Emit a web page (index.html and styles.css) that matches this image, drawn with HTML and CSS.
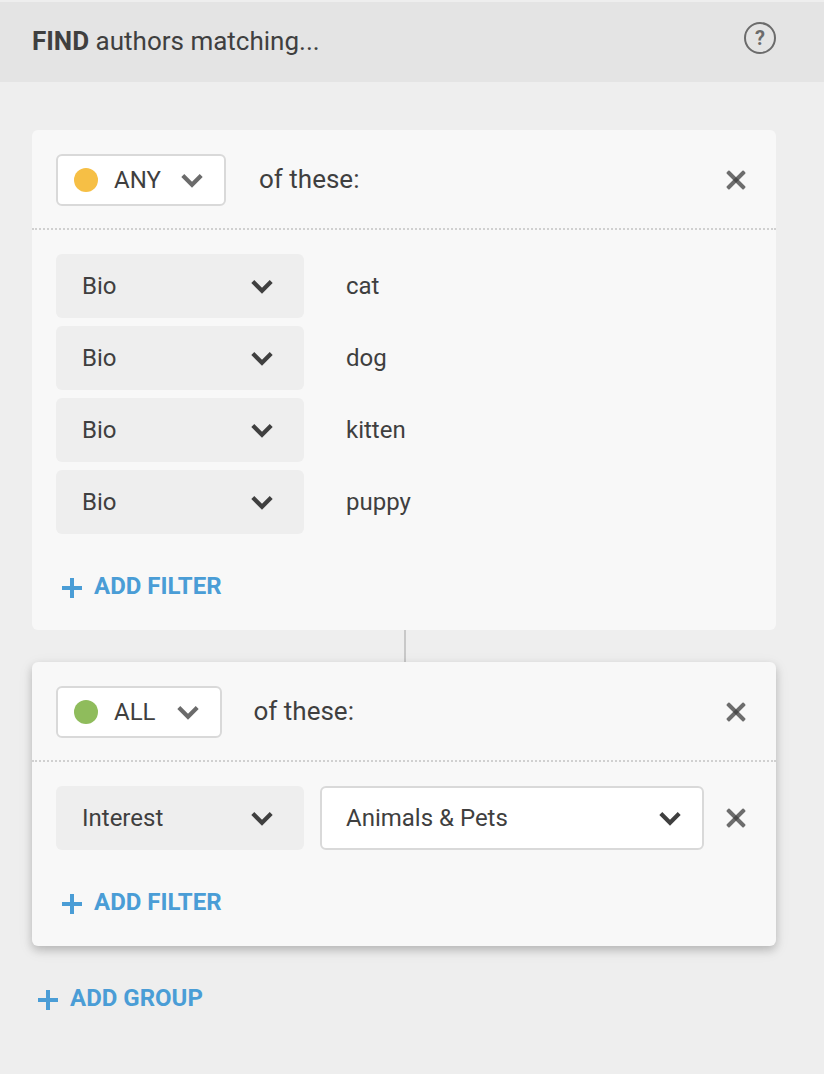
FILE: index.html
```html
<!DOCTYPE html>
<html lang="en">
<head>
<meta charset="utf-8">
<title>Find authors</title>
<link rel="stylesheet" href="styles.css">
</head>
<body>
<svg class="defs" width="0" height="0" aria-hidden="true">
  <symbol id="chevron" viewBox="0 0 24 16"><path d="M2.8 3.6 12 12.8 21.2 3.6" fill="none" stroke="currentColor" stroke-width="4.2"/></symbol>
  <symbol id="close" viewBox="0 0 24 24"><g fill="#3f3f3f" fill-opacity=".75"><rect x="0" y="10" width="24" height="4" rx="1" transform="rotate(45 12 12)"/><rect x="0" y="10" width="24" height="4" rx="1" transform="rotate(-45 12 12)"/></g></symbol>
  <symbol id="plus" viewBox="0 0 20 20"><path d="M8 0h4v8h8v4h-8v8H8v-8H0V8h8z" fill="currentColor"/></symbol>
</svg>
<header class="header">
  <h1 class="title"><strong>FIND</strong> authors matching...</h1>
  <div class="help">?</div>
</header>
<main class="main">
  <section class="card">
    <div class="card-head">
      <button class="mode mode-any"><span class="dot dot-any"></span><span class="mode-label">ANY</span><svg class="chevron"><use href="#chevron"/></svg></button>
      <span class="of">of these:</span>
      <button class="close"><svg class="x"><use href="#close"/></svg></button>
    </div>
    <div class="filters">
      <div class="row"><div class="field"><span>Bio</span><svg class="chevron"><use href="#chevron"/></svg></div><span class="value">cat</span></div>
      <div class="row"><div class="field"><span>Bio</span><svg class="chevron"><use href="#chevron"/></svg></div><span class="value">dog</span></div>
      <div class="row"><div class="field"><span>Bio</span><svg class="chevron"><use href="#chevron"/></svg></div><span class="value">kitten</span></div>
      <div class="row"><div class="field"><span>Bio</span><svg class="chevron"><use href="#chevron"/></svg></div><span class="value">puppy</span></div>
    </div>
    <button class="add"><svg class="plus"><use href="#plus"/></svg><span>ADD FILTER</span></button>
  </section>
  <div class="connector"></div>
  <section class="card card-active">
    <div class="card-head">
      <button class="mode mode-all"><span class="dot dot-all"></span><span class="mode-label">ALL</span><svg class="chevron"><use href="#chevron"/></svg></button>
      <span class="of">of these:</span>
      <button class="close"><svg class="x"><use href="#close"/></svg></button>
    </div>
    <div class="filters">
      <div class="row"><div class="field"><span>Interest</span><svg class="chevron"><use href="#chevron"/></svg></div><div class="select"><span>Animals &amp; Pets</span><svg class="chevron"><use href="#chevron"/></svg></div><button class="close"><svg class="x"><use href="#close"/></svg></button></div>
    </div>
    <button class="add"><svg class="plus"><use href="#plus"/></svg><span>ADD FILTER</span></button>
  </section>
  <button class="add add-group"><svg class="plus"><use href="#plus"/></svg><span>ADD GROUP</span></button>
</main>
</body>
</html>
```
FILE: styles.css
```css
* { box-sizing: border-box; }
body { margin: 0; min-height: 1074px; background: #eee; color: #3f3f3f; font: 24px/32px Roboto, sans-serif; }
button { border: 0; margin: 0; padding: 0; background: none; color: inherit; font: inherit; letter-spacing: inherit; }
svg { display: block; flex: none; }
.defs { position: absolute; }
.header { display: flex; justify-content: space-between; align-items: flex-start; height: 82px; border-top: 2px solid #eee; padding: 20px 48px 0 32px; background: #e4e4e4; }
.title { margin: 3px 0 0; font-size: 26px; line-height: 32px; font-weight: 400; }
.title strong { font-weight: 700; }
.help { width: 32px; height: 32px; border: 2px solid #6b6b6b; border-radius: 50%; color: #6b6b6b; font-size: 20px; line-height: 29px; font-weight: 700; text-align: center; }
.main { padding: 48px 48px 0 32px; }
.card { background: #f8f8f8; border-radius: 6px; padding-bottom: 28px; }
.card-active { box-shadow: 0 4px 8px rgba(0, 0, 0, .18), 0 4px 16px rgba(0, 0, 0, .08); }
.card-head { display: flex; align-items: center; height: 100px; padding: 2px 24px 0; border-bottom: 2px dotted #d0d0d0; }
.card-head .close { margin-left: auto; }
.mode { display: flex; align-items: center; height: 52px; padding: 0 20px 0 16px; background: #fff; border: 2px solid #d9d9d9; border-radius: 6px; }
.mode-any { width: 170px; margin-right: 33px; }
.mode-all { width: 166px; margin-right: 31.5px; }
.of { margin-bottom: 2px; font-size: 26px; line-height: 32px; }
.dot { width: 24px; height: 24px; border-radius: 50%; margin-right: 16px; }
.dot-any { background: #f6bf45; }
.dot-all { background: #8fbc5c; }
.chevron { width: 24px; height: 16px; margin-left: auto; }
.mode .chevron { color: #6b6b6b; }
.close { width: 32px; height: 32px; display: flex; align-items: center; justify-content: center; }
.x { width: 24px; height: 24px; }
.filters { display: grid; gap: 8px; padding: 24px 24px 0; }
.row { display: flex; align-items: center; height: 64px; }
.field, .select { display: flex; align-items: center; height: 64px; border-radius: 6px; }
.field { width: 248px; padding: 0 30px 0 26px; background: #eee; }
.select { width: 384px; margin-left: 16px; margin-right: 16px; padding: 0 20px 0 24px; background: #fff; border: 2px solid #d9d9d9; }
.value { margin-left: 42px; }
.add { display: flex; align-items: center; height: 32px; margin: 36px 0 0 30px; color: #4a9dd6; font-weight: 700; }
.plus { width: 20px; height: 20px; margin: 4px 12px 0 0; }
.connector { width: 2px; height: 32px; margin-left: 372px; background: #c8c8c8; }
.add-group { margin-left: 6px; }
```
